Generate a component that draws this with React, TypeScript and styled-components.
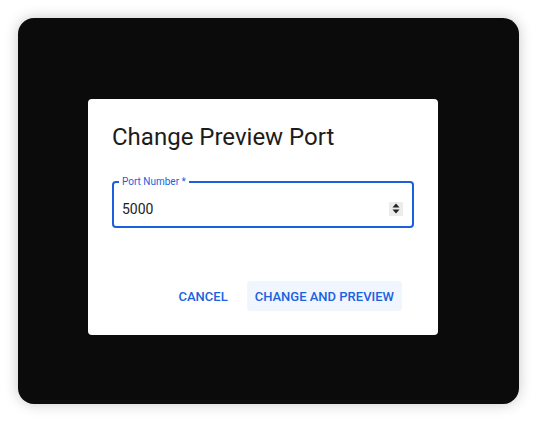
import React from "react";
import styled, { createGlobalStyle } from "styled-components";

const Global = createGlobalStyle`
  html, body { margin: 0; padding: 0; background: #ffffff; }
  body { font-family: Roboto, "Liberation Sans", sans-serif; }
`;

const Stage = styled.div`
  width: 537px;
  height: 422px;
  padding: 18px;
  box-sizing: border-box;
`;

const Window = styled.div`
  width: 501px;
  height: 386px;
  background: #0b0b0b;
  border-radius: 16px;
  box-shadow: 0 0 14px rgba(0, 0, 0, 0.22);
  padding: 81px 0 0 70px;
  box-sizing: border-box;
`;

const Dialog = styled.div`
  width: 350px;
  height: 236px;
  background: #ffffff;
  border-radius: 4px;
  box-sizing: border-box;
  padding: 22px 36px 24px 24px;
  display: flex;
  flex-direction: column;
`;

const Title = styled.h2`
  margin: 0;
  font-family: Roboto, sans-serif;
  font-weight: 400;
  font-size: 24px;
  line-height: 32px;
  color: #1c1c1c;
`;

const Field = styled.div`
  margin: 28px -12px 0 0;
  padding: 8px 8px 0 8px;
  height: 47px;
  box-sizing: border-box;
  border: 2px solid #1a5fdc;
  border-radius: 4px;
  display: flex;
  align-items: center;
  position: relative;
`;

const Label = styled.span`
  position: absolute;
  left: 5px;
  top: -7px;
  padding: 0 3px;
  background: #ffffff;
  font-size: 10px;
  line-height: 12px;
  color: #1a5fdc;
  font-family: Roboto, sans-serif;
`;

const Value = styled.div`
  flex: 1;
  font-size: 14px;
  line-height: 16px;
  color: #1c1c1c;
`;

const Spinner = styled.div`
  width: 14px;
  height: 14px;
  background: #ececec;
  display: flex;
  align-items: center;
  justify-content: center;
  margin-right: 1px;
`;

const Actions = styled.div`
  margin-top: auto;
  display: flex;
  justify-content: flex-end;
  align-items: center;
  gap: 11px;
`;

const Button = styled.button<{ $filled?: boolean }>`
  font-family: Roboto, sans-serif;
  font-weight: 500;
  font-size: 13px;
  text-transform: uppercase;
  color: #1a62e0;
  background: ${(p) => (p.$filled ? "#f1f5fe" : "transparent")};
  border: none;
  border-radius: 4px;
  height: 30px;
  padding: 0 8px;
  cursor: pointer;
`;

export default function App() {
  return (
    <>
      <Global />
      <Stage>
        <Window>
          <Dialog>
            <Title>Change Preview Port</Title>
            <Field>
              <Label>Port Number *</Label>
              <Value>5000</Value>
              <Spinner>
                <svg width="8" height="11" viewBox="0 0 8 11">
                  <path d="M4 0.5 L7.5 4.5 H0.5 Z" fill="#222" />
                  <path d="M4 10.5 L7.5 6.5 H0.5 Z" fill="#222" />
                </svg>
              </Spinner>
            </Field>
            <Actions>
              <Button>Cancel</Button>
              <Button $filled>Change and Preview</Button>
            </Actions>
          </Dialog>
        </Window>
      </Stage>
    </>
  );
}
